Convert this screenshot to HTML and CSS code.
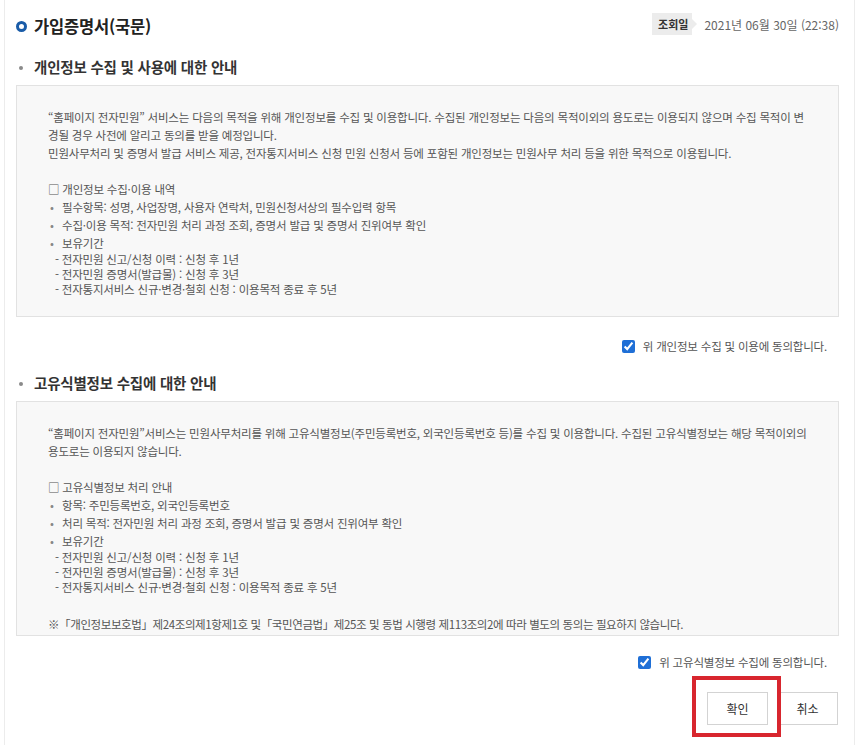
FILE: index.html
```html
<!DOCTYPE html>
<html lang="ko">
<head>
<meta charset="utf-8">
<title>가입증명서(국문)</title>
<link rel="stylesheet" href="styles.css">
</head>
<body>
<div class="page">
  <header class="head">
    <h1 class="title"><span class="ring"></span>가입증명서(국문)</h1>
    <div class="meta"><span class="tag">조회일</span><span class="date">2021년 06월 30일 (22:38)</span></div>
  </header>

  <section class="sec">
    <h2 class="sec-title">개인정보 수집 및 사용에 대한 안내</h2>
    <div class="notice">
      <p class="lead">“홈페이지 전자민원” 서비스는 다음의 목적을 위해 개인정보를 수집 및 이용합니다. 수집된 개인정보는 다음의 목적이외의 용도로는 이용되지 않으며 수집 목적이 변<br>경될 경우 사전에 알리고 동의를 받을 예정입니다.<br>민원사무처리 및 증명서 발급 서비스 제공, 전자통지서비스 신청 민원 신청서 등에 포함된 개인정보는 민원사무 처리 등을 위한 목적으로 이용됩니다.</p>
      <p class="sub">□ 개인정보 수집·이용 내역</p>
      <ul class="dots">
        <li>필수항목: 성명, 사업장명, 사용자 연락처, 민원신청서상의 필수입력 항목</li>
        <li>수집·이용 목적: 전자민원 처리 과정 조회, 증명서 발급 및 증명서 진위여부 확인</li>
        <li>보유기간</li>
      </ul>
      <ul class="dashes">
        <li>- 전자민원 신고/신청 이력 : 신청 후 1년</li>
        <li>- 전자민원 증명서(발급물) : 신청 후 3년</li>
        <li>- 전자통지서비스 신규·변경·철회 신청 : 이용목적 종료 후 5년</li>
      </ul>
    </div>
    <label class="agree"><input type="checkbox" checked><span>위 개인정보 수집 및 이용에 동의합니다.</span></label>
  </section>

  <section class="sec">
    <h2 class="sec-title">고유식별정보 수집에 대한 안내</h2>
    <div class="notice notice-id">
      <p class="lead">“홈페이지 전자민원”서비스는 민원사무처리를 위해 고유식별정보(주민등록번호, 외국인등록번호 등)를 수집 및 이용합니다. 수집된 고유식별정보는 해당 목적이외의<br>용도로는 이용되지 않습니다.</p>
      <p class="sub">□ 고유식별정보 처리 안내</p>
      <ul class="dots">
        <li>항목: 주민등록번호, 외국인등록번호</li>
        <li>처리 목적: 전자민원 처리 과정 조회, 증명서 발급 및 증명서 진위여부 확인</li>
        <li>보유기간</li>
      </ul>
      <ul class="dashes">
        <li>- 전자민원 신고/신청 이력 : 신청 후 1년</li>
        <li>- 전자민원 증명서(발급물) : 신청 후 3년</li>
        <li>- 전자통지서비스 신규·변경·철회 신청 : 이용목적 종료 후 5년</li>
      </ul>
      <p class="note">※「개인정보보호법」제24조의제1항제1호 및「국민연금법」제25조 및 동법 시행령 제113조의2에 따라 별도의 동의는 필요하지 않습니다.</p>
    </div>
    <label class="agree agree-last"><input type="checkbox" checked><span>위 고유식별정보 수집에 동의합니다.</span></label>
  </section>

  <div class="actions">
    <span class="hl-wrap"><button class="btn" type="button">확인</button><span class="hl"></span></span>
    <button class="btn" type="button">취소</button>
  </div>
</div>
</body>
</html>
```

FILE: styles.css
```css
* { box-sizing: border-box; }

body {
  margin: 0;
  background: #fff;
  font-family: "Noto Sans CJK KR", "Noto Sans", sans-serif;
  color: #333;
}

.page {
  margin-left: 4px;
  width: 851px;
  min-height: 745px;
  border-left: 1px solid #ececec;
  border-right: 1px solid #ececec;
  padding: 12px 15px 0 11px;
}

.head {
  display: flex;
  justify-content: space-between;
  align-items: center;
  height: 28px;
}

.title {
  margin: 0;
  display: flex;
  align-items: center;
  gap: 7px;
  font-size: 16.5px;
  font-weight: 700;
  letter-spacing: -0.2px;
  line-height: 28px;
  color: #222;
}

.ring {
  width: 11px;
  height: 11px;
  border: 3px solid #1a5ca8;
  border-radius: 50%;
}

.meta {
  display: flex;
  align-items: center;
  gap: 12px;
  margin-top: -4px;
}

.tag {
  position: relative;
  height: 22px;
  line-height: 22px;
  padding: 0 4px 0 6px;
  background: #ececec;
  font-size: 11px;
  font-weight: 700;
  color: #333;
}

.tag::after {
  content: "";
  position: absolute;
  left: 100%;
  top: 6px;
  border-style: solid;
  border-width: 5px 0 5px 5px;
  border-color: transparent transparent transparent #ececec;
}

.date {
  font-size: 12px;
  color: #666;
}

.sec-title {
  position: relative;
  margin: 17px 0 8px;
  padding-left: 18px;
  font-size: 14.5px;
  font-weight: 700;
  letter-spacing: -0.2px;
  line-height: 20px;
  color: #333;
}

.sec-title::before {
  content: "";
  position: absolute;
  left: 3px;
  top: 9px;
  width: 4px;
  height: 4px;
  border-radius: 50%;
  background: #8a8a8a;
}

.notice {
  background: #f8f8f8;
  border: 1px solid #e2e2e2;
  padding: 22px 8px 19px 31px;
  font-size: 11.5px;
  letter-spacing: -0.2px;
  line-height: 18px;
  color: #555;
}

.notice p { margin: 0; }
.notice .lead { margin-bottom: 18px; }

.notice-id { padding-bottom: 2px; }
.notice .note {
  margin-top: 20px;
  letter-spacing: -0.4px;
}

ul {
  list-style: none;
  margin: 0;
  padding: 0;
}

.dots li {
  position: relative;
  padding-left: 14px;
}

.dots li::before {
  content: "•";
  position: absolute;
  left: 2px;
  color: #888;
}

.dashes li {
  line-height: 15px;
  padding-left: 7px;
}

.agree {
  display: flex;
  justify-content: flex-end;
  align-items: center;
  gap: 8px;
  margin-top: 19px;
  padding-right: 12px;
  font-size: 11.5px;
  letter-spacing: -0.2px;
  line-height: 20px;
  color: #555;
}

.agree-last { margin-top: 16px; }

.agree input {
  margin: 0;
  width: 13px;
  height: 13px;
  accent-color: #1f6fd6;
}

.actions {
  display: flex;
  justify-content: flex-end;
  gap: 9px;
  margin-top: 20px;
  padding-right: 1px;
}

.hl-wrap {
  position: relative;
  display: flex;
}

.btn {
  width: 61px;
  height: 33px;
  padding: 0;
  border: 1px solid #d3d3d3;
  background: #fff;
  font-family: inherit;
  font-size: 12px;
  color: #333;
}

.hl {
  position: absolute;
  left: -15px;
  right: -13px;
  top: -16px;
  bottom: -12px;
  border: 4px solid #d8262e;
  pointer-events: none;
}
```
